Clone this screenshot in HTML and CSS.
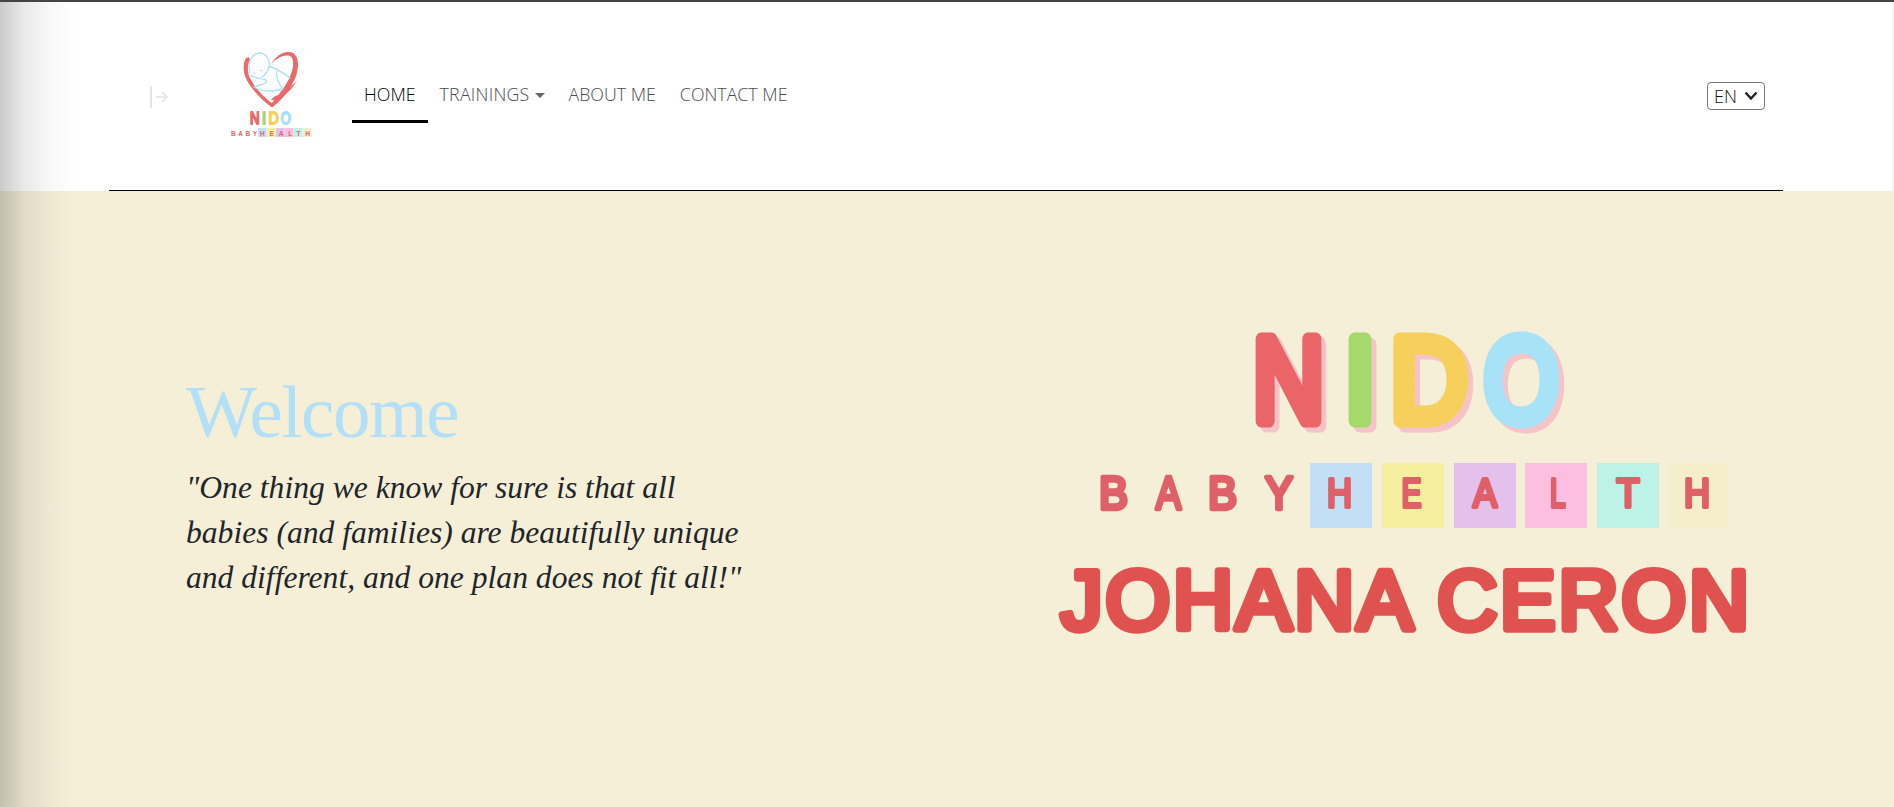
FILE: index.html
```html
<!DOCTYPE html>
<html lang="en">
<head>
<meta charset="utf-8">
<title>Nido Baby Health</title>
<link rel="stylesheet" href="styles.css">
</head>
<body>
<div class="edge-shadow"></div>
<header class="site-header">
  <div class="header-inner">
    <button class="toggle" aria-label="Expand">
      <svg width="20" height="24" viewBox="0 0 20 24"><path class="toggle-line" d="M2 1V23"/><path class="toggle-arrow" d="M7 12H18M13 7l5 5-5 5"/></svg>
    </button>
    <a class="logo" href="#">
      <svg width="86" height="90" viewBox="228 50 86 90">
        <path class="heart" d="M246 58C242 65 243 75 249 84C255 93 264 102 272 107.500C281 101 291 90 296 76C300 64 298 53 290 52C282 51 275 57 271 64C276 59 283 54 290 56C294 58 294 66 291 74C287 85 279 94 272 103C263 97 255 87 251 80C247 73 247 66 250 60L249 57Z"/>
        <path class="heart" d="M297 81C291 87 285 92 280 95C276 95 273 97 271 100L274 100C282 98 291 91 297 81Z"/>
        <path class="baby" d="M250 72C247 62 252 54 259 53C266 53 271 60 269 67C268 71 265 75 262 77M250 75C254 78 260 78 266 80C268 83 264 84 260 85L254 87C259 90 265 91 270 91C274 91 279 90 283 89C279 84 275 78 277 69M269 66C276 69 284 73 290 78"/>
        <path class="baby-thin" d="M253 72.500l3 1M260 71l3-1"/>
        <text class="lg-nido lg-red" x="250" y="124" textLength="9.500" lengthAdjust="spacingAndGlyphs">N</text>
        <text class="lg-nido lg-green" x="262" y="124" textLength="4.200" lengthAdjust="spacingAndGlyphs">I</text>
        <text class="lg-nido lg-yellow" x="268.400" y="124" textLength="10.300" lengthAdjust="spacingAndGlyphs">D</text>
        <text class="lg-nido lg-blue" x="280.800" y="124" textLength="10" lengthAdjust="spacingAndGlyphs">O</text>
        <text class="lg-baby" x="231" y="135.500" textLength="26" lengthAdjust="spacing">BABY</text>
        <rect class="b1" x="258" y="128" width="8.600" height="9"/><rect class="b2" x="267" y="128" width="8.600" height="9"/><rect class="b3" x="276" y="128" width="8.600" height="9"/><rect class="b4" x="285" y="128" width="8.600" height="9"/><rect class="b5" x="294" y="128" width="8.600" height="9"/><rect class="b6" x="303" y="128" width="8.600" height="9"/>
        <text class="lg-baby" x="260" y="135.500" textLength="50" lengthAdjust="spacing">HEALTH</text>
      </svg>
    </a>
    <nav class="main-nav">
      <a class="nav-link active" href="#">HOME</a>
      <a class="nav-link nav-dropdown" href="#">TRAININGS<span class="caret"></span></a>
      <a class="nav-link" href="#">ABOUT ME</a>
      <a class="nav-link" href="#">CONTACT ME</a>
    </nav>
    <div class="lang-wrap">
      <select class="lang" aria-label="Language"><option>EN</option><option>ES</option></select>
      <svg class="lang-chevron" width="14" height="10" viewBox="0 0 14 10"><path d="M1.500 1.500L7 7.500L12.500 1.500"/></svg>
    </div>
  </div>
</header>
<main class="hero">
  <section class="hero-text">
    <h1 class="hero-title">Welcome</h1>
    <p class="hero-quote">"One thing we know for sure is that all babies (and families) are beautifully unique and different, and one plan does not fit all!"</p>
  </section>
  <section class="hero-art">
    <svg class="wordmark" width="720" height="320" viewBox="1040 325 720 320">
      <g class="soft">
        <g class="nido-letters">
          <text class="big red" x="1253" y="421" textLength="71" lengthAdjust="spacingAndGlyphs">N</text>
          <text class="big green" x="1344.500" y="421" textLength="31" lengthAdjust="spacingAndGlyphs">I</text>
          <text class="big yellow" x="1390.500" y="421" textLength="77" lengthAdjust="spacingAndGlyphs">D</text>
          <text class="big blue" x="1484" y="421" textLength="74.500" lengthAdjust="spacingAndGlyphs">O</text>
        </g>
        <rect class="b1" x="1310" y="463" width="62" height="65"/>
        <rect class="b2" x="1382" y="463" width="62" height="65"/>
        <rect class="b3" x="1454" y="463" width="62" height="65"/>
        <rect class="b4" x="1525" y="463" width="62" height="65"/>
        <rect class="b5" x="1597" y="463" width="62" height="65"/>
        <rect class="b6" x="1669" y="463" width="59" height="65"/>
        <text class="mid" x="1099" y="508.500" textLength="29" lengthAdjust="spacingAndGlyphs">B</text>
        <text class="mid" x="1156" y="508.500" textLength="25" lengthAdjust="spacingAndGlyphs">A</text>
        <text class="mid" x="1208" y="508.500" textLength="29" lengthAdjust="spacingAndGlyphs">B</text>
        <text class="mid" x="1265" y="508.500" textLength="28" lengthAdjust="spacingAndGlyphs">Y</text>
        <text class="mid-b" x="1327" y="507" textLength="25" lengthAdjust="spacingAndGlyphs">H</text>
        <text class="mid-b" x="1401.500" y="507" textLength="20" lengthAdjust="spacingAndGlyphs">E</text>
        <text class="mid-b" x="1473" y="507" textLength="24" lengthAdjust="spacingAndGlyphs">A</text>
        <text class="mid-b" x="1550" y="507" textLength="15.600" lengthAdjust="spacingAndGlyphs">L</text>
        <text class="mid-b" x="1616.500" y="507" textLength="23" lengthAdjust="spacingAndGlyphs">T</text>
        <text class="mid-b" x="1684" y="507" textLength="26" lengthAdjust="spacingAndGlyphs">H</text>
        <text class="name" x="1061" y="629">JOHANA CERON</text>
      </g>
    </svg>
  </section>
</main>
</body>
</html>
```

FILE: styles.css
```css
* { box-sizing: border-box; }
html, body { margin: 0; height: 100%; overflow: hidden; }
body {
  background: #f5efd8;
  border-top: 2px solid #444;
  font-family: "Open Sans", "Liberation Sans", sans-serif;
  position: relative;
}
.edge-shadow {
  position: absolute;
  left: 0; top: 0; bottom: 0;
  width: 76px;
  pointer-events: none;
  z-index: 5;
  background: linear-gradient(to right, rgba(60,60,60,.27), rgba(60,60,60,.11) 32%, rgba(60,60,60,.035) 65%, rgba(60,60,60,0));
}
.site-header {
  background: #fff;
  height: 189px;
  padding: 0 111px 0 109px;
  box-shadow: inset -2px 0 0 #f5f5f5;
}
.header-inner {
  height: 100%;
  display: flex;
  align-items: flex-start;
  border-bottom: 1px solid #000;
  padding: 48px 18px 0 40px;
}
.toggle {
  border: 0; background: none; padding: 0;
  margin-top: 35px;
  width: 79px;
  height: 24px;
  display: block;
  text-align: left;
}
.toggle svg { display: block; }
.toggle-line { fill: none; stroke: #e2e4ec; stroke-width: 2; }
.toggle-arrow { fill: none; stroke: #e2e4ec; stroke-width: 1.6; }
.logo { display: block; width: 124px; height: 90px; }
.logo svg { display: block; }
.heart { fill: #e96a6a; }
.baby { fill: none; stroke: #aee0f6; stroke-width: 1.4; stroke-linecap: round; stroke-linejoin: round; }
.baby-thin { fill: none; stroke: #aee0f6; stroke-width: .8; }
.lg-nido { font: 400 16px "Liberation Sans", sans-serif; stroke-width: 1.8; stroke-linejoin: round; }
.lg-red { fill: #ea6a6c; stroke: #ea6a6c; }
.lg-green { fill: #a5d96b; stroke: #a5d96b; }
.lg-yellow { fill: #f6cf5c; stroke: #f6cf5c; }
.lg-blue { fill: #a8e0f5; stroke: #a8e0f5; }
.lg-baby { font: 700 6.5px "Liberation Sans", sans-serif; fill: #e0646a; }
.b1 { fill: #c3dff5; }
.b2 { fill: #f7efa0; }
.b3 { fill: #e4c1ea; }
.b4 { fill: #fdbfe0; }
.b5 { fill: #bdf3e6; }
.b6 { fill: #f5eecb; }
.main-nav { display: flex; }
.nav-link {
  display: block;
  padding: 32px 12px 0;
  height: 73px;
  font-size: 17.800px;
  font-weight: 300;
  line-height: 24px;
  color: #4a4a4a;
  text-decoration: none;
  border-bottom: 3px solid transparent;
  white-space: nowrap;
}
.nav-link.active { color: #000; border-bottom-color: #000; }
.nav-dropdown { letter-spacing: .25px; }
.caret {
  display: inline-block;
  margin-left: 5px;
  vertical-align: 3px;
  border-top: 5px solid #666;
  border-left: 5px solid transparent;
  border-right: 5px solid transparent;
}
.lang-wrap {
  position: relative;
  margin: 32px 0 0 auto;
  width: 58px;
  height: 28px;
}
.lang {
  display: block;
  appearance: none;
  width: 100%;
  height: 100%;
  font: 300 18px "Open Sans", sans-serif;
  color: #111;
  background: #fff;
  border: 1px solid #767676;
  border-radius: 4px;
  padding: 0 0 0 6px;
}
.lang-chevron {
  position: absolute;
  right: 7px;
  top: 9px;
  pointer-events: none;
}
.lang-chevron path { fill: none; stroke: #222; stroke-width: 2.4; }
.hero {
  display: grid;
  grid-template-columns: 1040px 1fr;
  height: 616px;
}
.hero-text { padding: 178px 0 0 186px; }
.hero-title {
  margin: 0;
  font: 400 75px/86px "Liberation Serif", serif;
  letter-spacing: -1.300px;
  color: #b3e0f7;
}
.hero-quote {
  margin: 9.500px 0 0;
  width: 570px;
  font: italic 400 31.600px/45.300px "Liberation Serif", serif;
  color: #212529;
}
.hero-art { padding-top: 134px; }
.wordmark { display: block; overflow: visible; }
.soft { filter: blur(.7px); }
.nido-letters { filter: drop-shadow(5px 5px 0 #f5c4c9); }
.big { font: 400 118px "Liberation Sans", sans-serif; stroke-width: 13; stroke-linejoin: round; }
.red { fill: #ea6568; stroke: #ea6568; }
.green { fill: #a5d96b; stroke: #a5d96b; }
.yellow { fill: #f6cf5c; stroke: #f6cf5c; }
.blue { fill: #a8e2f6; stroke: #a8e2f6; }
.mid { font: 400 47px "Liberation Sans", sans-serif; fill: #e0606a; stroke: #e0606a; stroke-width: 4.500; stroke-linejoin: round; }
.mid-b { font: 400 41px "Liberation Sans", sans-serif; fill: #e0606a; stroke: #e0606a; stroke-width: 4; stroke-linejoin: round; }
.name { font: 400 83px "Liberation Sans", sans-serif; letter-spacing: 3px; fill: #e0524f; stroke: #e0524f; stroke-width: 7.500; stroke-linejoin: round; }
```
